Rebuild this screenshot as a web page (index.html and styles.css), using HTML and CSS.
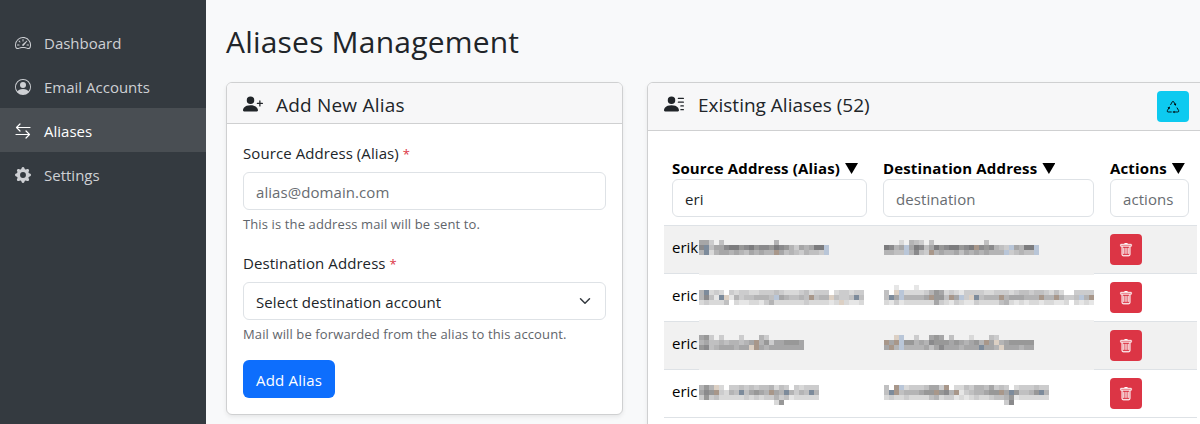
FILE: index.html
```html
<!DOCTYPE html>
<html lang="en">
<head>
<meta charset="utf-8">
<title>Aliases Management</title>
<link rel="stylesheet" href="styles.css">
</head>
<body>
<div class="app">
  <nav class="sidebar">
    <a class="nav-item"><svg class="icon" viewBox="0 0 16 16"><path d="M8 4a.5.5 0 0 1 .5.5V6a.5.5 0 0 1-1 0V4.5A.5.5 0 0 1 8 4M3.732 5.732a.5.5 0 0 1 .707 0l.915.914a.5.5 0 1 1-.708.708l-.914-.915a.5.5 0 0 1 0-.707M2 10a.5.5 0 0 1 .5-.5h1.586a.5.5 0 0 1 0 1H2.5A.5.5 0 0 1 2 10m9.5 0a.5.5 0 0 1 .5-.5h1.5a.5.5 0 0 1 0 1H12a.5.5 0 0 1-.5-.5m.754-4.246a.39.39 0 0 0-.527-.02L7.547 9.31a.91.91 0 1 0 1.302 1.258l3.434-4.297a.39.39 0 0 0-.029-.518z"/><path fill-rule="evenodd" d="M0 10a8 8 0 1 1 15.547 2.661c-.442 1.253-1.845 1.602-2.932 1.25C11.309 13.488 9.475 13 8 13c-1.474 0-3.31.488-4.615.911-1.087.352-2.49.003-2.932-1.25A8 8 0 0 1 0 10m8-7a7 7 0 0 0-6.603 9.329c.203.575.923.876 1.68.63C4.397 12.533 6.358 12 8 12s3.604.532 4.923.96c.757.245 1.477-.056 1.68-.631A7 7 0 0 0 8 3"/></svg><span>Dashboard</span></a>
    <a class="nav-item"><svg class="icon" viewBox="0 0 16 16"><path d="M11 6a3 3 0 1 1-6 0 3 3 0 0 1 6 0"/><path fill-rule="evenodd" d="M0 8a8 8 0 1 1 16 0A8 8 0 0 1 0 8m8-7a7 7 0 0 0-5.468 11.37C3.242 11.226 4.805 10 8 10s4.757 1.225 5.468 2.37A7 7 0 0 0 8 1"/></svg><span>Email Accounts</span></a>
    <a class="nav-item active"><svg class="icon line" viewBox="0 0 16 16"><path d="M15 4.5H1.5M5 1 1.5 4.5 5 8M1 11.5h13.5M11 8l3.5 3.5L11 15"/></svg><span>Aliases</span></a>
    <a class="nav-item"><svg class="icon" viewBox="0 0 16 16"><path d="M9.405 1.05c-.413-1.4-2.397-1.4-2.81 0l-.1.34a1.464 1.464 0 0 1-2.105.872l-.31-.17c-1.283-.698-2.686.705-1.987 1.987l.169.311c.446.82.023 1.841-.872 2.105l-.34.1c-1.4.413-1.4 2.397 0 2.81l.34.1a1.464 1.464 0 0 1 .872 2.105l-.17.31c-.698 1.283.705 2.686 1.987 1.987l.311-.169a1.464 1.464 0 0 1 2.105.872l.1.34c.413 1.4 2.397 1.4 2.81 0l.1-.34a1.464 1.464 0 0 1 2.105-.872l.31.17c1.283.698 2.686-.705 1.987-1.987l-.169-.311a1.464 1.464 0 0 1 .872-2.105l.34-.1c1.4-.413 1.4-2.397 0-2.81l-.34-.1a1.464 1.464 0 0 1-.872-2.105l.17-.31c.698-1.283-.705-2.686-1.987-1.987l-.311.169a1.464 1.464 0 0 1-2.105-.872zM8 10.93a2.929 2.929 0 1 1 0-5.86 2.929 2.929 0 0 1 0 5.858z"/></svg><span>Settings</span></a>
  </nav>
  <main class="content">
    <h1>Aliases Management</h1>
    <div class="columns">
      <section class="card form-card">
        <header class="card-header"><svg class="icon-lg" viewBox="0 0 16 16"><path d="M1 14s-1 0-1-1 1-4 6-4 6 3 6 4-1 1-1 1zm5-6a3 3 0 1 0 0-6 3 3 0 0 0 0 6"/><path d="M13.5 5a.5.5 0 0 1 .5.5V7h1.5a.5.5 0 0 1 0 1H14v1.5a.5.5 0 0 1-1 0V8h-1.5a.5.5 0 0 1 0-1H13V5.5a.5.5 0 0 1 .5-.5"/></svg><h2>Add New Alias</h2></header>
        <form class="card-body">
          <label>Source Address (Alias) <span class="required">*</span></label>
          <input class="control" placeholder="alias@domain.com">
          <p class="hint">This is the address mail will be sent to.</p>
          <label>Destination Address <span class="required">*</span></label>
          <div class="control select"><span>Select destination account</span><svg class="chevron" viewBox="0 0 16 16"><path d="m2 5 6 6 6-6"/></svg></div>
          <p class="hint">Mail will be forwarded from the alias to this account.</p>
          <button type="button" class="btn primary">Add Alias</button>
        </form>
      </section>
      <section class="card list-card">
        <header class="card-header list-header"><svg class="icon-lg" viewBox="0 0 16 16"><path d="M6 8a3 3 0 1 0 0-6 3 3 0 0 0 0 6m-5 6s-1 0-1-1 1-4 6-4 6 3 6 4-1 1-1 1zM11 3.5a.5.5 0 0 1 .5-.5h4a.5.5 0 0 1 0 1h-4a.5.5 0 0 1-.5-.5m.5 2.5a.5.5 0 0 0 0 1h4a.5.5 0 0 0 0-1zm2 3a.5.5 0 0 0 0 1h2a.5.5 0 0 0 0-1zm0 3a.5.5 0 0 0 0 1h2a.5.5 0 0 0 0-1z"/></svg><h2>Existing Aliases (52)</h2>
          <button class="btn-sm info"><svg viewBox="0 0 16 16"><path class="loop" d="m5.1 5.7 2.1-3.7q.8-1.2 1.6 0l1.9 3.4M12.5 8.7l2 3.5q.4 1.4-.9 1.5H9.5M6.5 13.7H2.3q-1.3-.2-.8-1.5l1.8-3.2"/><path d="m11.400 6.600.2-2.900-2.600 1.500zM7.300 13.700l2.500-1.500v3zM4.300 7.300 1.700 8.800l2.700 1.500z"/></svg></button>
        </header>
        <div class="card-body">
          <div class="table-wrap">
            <table>
              <colgroup><col class="c1"><col class="c2"><col class="c3"></colgroup>
              <thead><tr>
                <th><div>Source Address (Alias) <i class="sort"></i></div><input class="control" value="eri"></th>
                <th><div>Destination Address <i class="sort"></i></div><input class="control" placeholder="destination"></th>
                <th><div>Actions <i class="sort"></i></div><input class="control" placeholder="actions"></th>
              </tr></thead>
              <tbody id="rows"></tbody>
            </table>
            <svg class="mosaic" id="mosaic" width="395" height="175" viewBox="0 0 395 175" shape-rendering="crispEdges"></svg>
          </div>
        </div>
      </section>
    </div>
  </main>
</div>
<script src="app.js"></script>
</body>
</html>
```
FILE: styles.css
```css
* { box-sizing: border-box; }
body { margin: 0; font: 15px/24px "Open Sans", "Noto Sans", sans-serif; color: #212529; background: #f8f9fa; }
.app { display: flex; height: 424px; overflow: hidden; }
.sidebar { width: 206px; flex: none; padding-top: 20px; background: #343a40; }
.nav-item { display: flex; align-items: center; gap: 13px; height: 44px; padding: 0 15px; color: #ced0d4; }
.nav-item span { padding-top: 2px; }
.nav-item.active { background: #494e53; color: #fff; }
.icon { width: 16px; height: 16px; margin-top: 2px; fill: currentColor; flex: none; }
.icon.line { fill: none; stroke: currentColor; stroke-width: 1.2; stroke-linecap: round; stroke-linejoin: round; }
.content { flex: none; width: 1010px; padding: 23px 0 0 20px; }
h1 { margin: 0 0 21px; font-size: 30px; line-height: 38px; font-weight: 400; letter-spacing: .2px; }
.columns { display: flex; gap: 24px; align-items: flex-start; }
.card { background: #fff; border: 1px solid #cfd0d1; border-radius: 6px; box-shadow: 0 2px 4px rgba(0,0,0,.075); }
.form-card { width: 397px; }
.list-card { width: 567px; height: 400px; }
.card-header { display: flex; align-items: flex-start; height: 41px; padding: 9px 16px 0; background: #f7f7f8; border-bottom: 1px solid #cfd0d1; border-radius: 5px 5px 0 0; }
.list-header { height: 48px; padding: 8px 24px 0 16px; }
.icon-lg { width: 20px; height: 20px; margin: 3px 13px 0 0; fill: currentColor; }
.form-card .icon-lg { margin-top: 2px; }
h2 { margin: 2px 0 0; font-size: 19px; line-height: 24px; font-weight: 400; letter-spacing: .2px; }
.form-card h2 { margin-top: 1px; }
.list-header h2 { letter-spacing: 0; margin-left: 1px; }
.card-body { padding: 16px; }
label { display: block; padding-top: 1px; margin-bottom: 7px; letter-spacing: .08px; }
.required { font-size: 13px; line-height: 1; color: #dc3545; }
.control { display: block; width: 100%; height: 38px; padding: 8px 12px 6px; border: 1px solid #dee2e6; border-radius: 6px; background: #fff; color: #212529; font: inherit; font-weight: 400; letter-spacing: .07px; outline: 0; }
.control::placeholder { color: #686c71; opacity: 1; }
.select { display: flex; align-items: center; justify-content: space-between; }
.chevron { width: 16px; height: 12px; margin-top: -2px; fill: none; stroke: #343a40; stroke-width: 2; stroke-linecap: round; stroke-linejoin: round; }
.hint { margin: 4px 0 16px; font-size: 13px; line-height: 20px; letter-spacing: .12px; color: #5f656b; }
.btn { height: 38px; width: 92px; padding: 2px 0 0; border: 0; border-radius: 6px; font: inherit; letter-spacing: .2px; color: #fff; display: block; }
.primary { background: #0d6efd; }
.btn-sm { display: flex; align-items: center; justify-content: center; width: 32px; height: 31px; padding: 0; border: 0; border-radius: 4px; }
.btn-sm svg { width: 14px; height: 14px; }
.info { margin-left: auto; background: #0dcaf0; }
.info .loop { fill: none; stroke: #000; stroke-width: 1; }
.danger { background: #dc3545; fill: #fff; stroke: #fff; stroke-width: .3; }
.table-wrap { position: relative; width: 533px; }
table { width: 533px; border-collapse: separate; border-spacing: 0; table-layout: fixed; color: #000; }
.c1 { width: 211px; }
.c2 { width: 227px; }
.c3 { width: 95px; }
th { height: 79px; padding: 8px; text-align: left; font-weight: 700; letter-spacing: .15px; border-bottom: 1px solid #dee2e6; }
th div { height: 24px; padding-top: 1px; white-space: nowrap; }
.sort { display: inline-block; width: 13px; height: 11px; margin-left: 1px; background: #000; clip-path: polygon(0 0, 100% 0, 50% 100%); }
td { height: 48px; padding: 0 8px; border-bottom: 1px solid #dee2e6; }
td:first-child { padding-bottom: 6px; }
tbody tr:nth-child(odd) { background: #f1f1f1; }
.mosaic { position: absolute; left: 35px; top: 93px; }
```
FILE: app.js
```js
const trash = '<svg viewBox="0 0 16 16"><path d="M5.5 5.5A.5.5 0 0 1 6 6v6a.5.5 0 0 1-1 0V6a.5.5 0 0 1 .5-.5m2.5 0a.5.5 0 0 1 .5.5v6a.5.5 0 0 1-1 0V6a.5.5 0 0 1 .5-.5m3 .5a.5.5 0 0 0-1 0v6a.5.5 0 0 0 1 0z"/><path d="M14.5 3a1 1 0 0 1-1 1H13v9a2 2 0 0 1-2 2H5a2 2 0 0 1-2-2V4h-.5a1 1 0 0 1-1-1V2a1 1 0 0 1 1-1H6a1 1 0 0 1 1-1h2a1 1 0 0 1 1 1h3.5a1 1 0 0 1 1 1zM4.118 4 4 4.059V13a1 1 0 0 0 1 1h6a1 1 0 0 0 1-1V4.059L11.882 4zM2.5 3h11V2h-11z"/></svg>';
document.getElementById('rows').innerHTML = ['erik', 'eric', 'eric', 'eric'].map(name =>
  `<tr><td>${name}</td><td></td><td><button class="btn-sm danger">${trash}</button></td></tr>`).join('');

// Pixelated parts of the addresses, in 5px cells: digits are greys, letters are tints.
const tones = { 0: '#6e6e70', 1: '#7c7c7e', 2: '#8a8a8c', 3: '#989898', 4: '#a6a6a7', 5: '#b4b4b5', 6: '#c0c0c1', 7: '#cccccd', 8: '#d9d9d9', 9: '#e6e6e6', a: '#7d8b9b', b: '#b9c6d8', t: '#a8978a', p: '#dcd0c4' };
const blocks = [
  [0, 0, [
    '447.6..........5..........',
    '2a64421132132231235745411b',
    '5a8544545645455t465675667b']],
  [185, 0, [
    '...8.567.6..........6..........',
    '1254b4126413211321t232567b4511b',
    '5566b5267t54554645454555b76566b']],
  [0, 50, [
    '5a878.78778877767888768777.877877',
    '5269ap957665556b456656t655p6776a6',
    '878886.899889758888887888898p8998']],
  [185, 45, [
    '..9...9...................................',
    '6.pb88887534878977778877787667667868..7777',
    '6a4b55554t336t4b7pa6555t5444555t55t5776b5t',
    '8979888888478978997888865898988988998.8989']],
  [0, 95, [
    '437.7...7...57.......',
    '54665655654t537443334',
    '3265444544pt454444444']],
  [185, 95, [
    '..pb..7..434.6...8...67.......',
    't4tb3354523334345435t4p5433333',
    '4t5b555546424445444a445p444544']],
  [0, 145, [
    '535p8.776767665867.78777',
    '423t7856a64345t45a5756a5',
    '737688888787877576988888']],
  [185, 145, [
    '6.tb87776447t.88675564767.8777677',
    '6at6555433t325t97655433t4a36653a5',
    '878878888658779898788766539888888',
    '........................72.......']]
];
const rect = (x, y, w, h, fill) => `<rect x="${x}" y="${y}" width="${w}" height="${h}" fill="${fill}"/>`;
let art = rect(0, 0, 395, 35, '#f1f1f1') + rect(0, 35, 395, 45, '#fff') + rect(0, 80, 395, 50, '#f1f1f1') + rect(0, 130, 395, 45, '#fff');
for (const [x, y, lines] of blocks)
  lines.forEach((line, r) => [...line].forEach((c, i) => { if (tones[c]) art += rect(x + i * 5, y + r * 5, 5, 5, tones[c]); }));
art += rect(80, 160, 5, 5, tones[3]) + rect(75, 160, 5, 5, tones[8]);
document.getElementById('mosaic').innerHTML = art;
```
